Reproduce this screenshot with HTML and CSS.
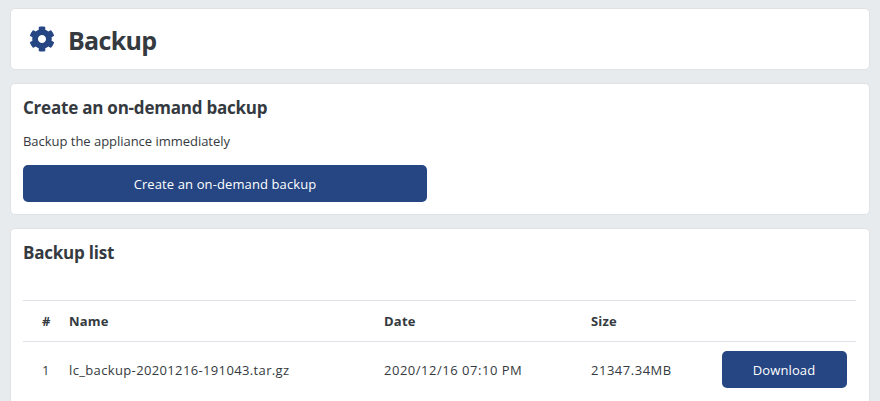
FILE: index.html
```html
<!DOCTYPE html>
<html lang="en">
<head>
<meta charset="utf-8">
<title>Backup</title>
<link rel="stylesheet" href="styles.css">
</head>
<body>
<header class="card head">
<svg class="gear" viewBox="0 0 512 512"><path d="M487.4 315.7l-42.6-24.6c4.3-23.2 4.3-47 0-70.2l42.6-24.6c4.9-2.8 7.1-8.6 5.5-14-11.1-35.6-30-67.8-54.7-94.6-3.8-4.1-10-5.1-14.8-2.3L380.8 110c-17.9-15.4-38.5-27.3-60.8-35.1V25.8c0-5.6-3.9-10.5-9.4-11.7-36.7-8.2-74.3-7.8-109.2 0-5.5 1.2-9.4 6.1-9.4 11.7V75c-22.2 7.9-42.8 19.8-60.8 35.1L88.7 85.5c-4.9-2.8-11-1.9-14.8 2.3-24.7 26.7-43.6 58.9-54.7 94.6-1.7 5.4.6 11.2 5.5 14L67.3 221c-4.3 23.2-4.3 47 0 70.2l-42.6 24.6c-4.9 2.8-7.1 8.6-5.5 14 11.1 35.6 30 67.8 54.7 94.6 3.8 4.1 10 5.1 14.8 2.3l42.6-24.6c17.9 15.4 38.5 27.3 60.8 35.1v49.2c0 5.6 3.9 10.5 9.4 11.7 36.7 8.2 74.3 7.8 109.2 0 5.5-1.2 9.4-6.1 9.4-11.7v-49.2c22.2-7.9 42.8-19.8 60.8-35.1l42.6 24.6c4.9 2.8 11 1.9 14.8-2.3 24.7-26.7 43.6-58.9 54.7-94.6 1.5-5.5-.7-11.3-5.6-14.1zM256 336c-44.1 0-80-35.9-80-80s35.9-80 80-80 80 35.9 80 80-35.9 80-80 80z"/></svg>
<h1>Backup</h1>
</header>
<section class="card create">
<h2>Create an on-demand backup</h2>
<p>Backup the appliance immediately</p>
<button class="btn wide">Create an on-demand backup</button>
</section>
<section class="card list">
<h2>Backup list</h2>
<table>
<thead><tr><th class="num">#</th><th class="name">Name</th><th class="date">Date</th><th class="size">Size</th><th></th></tr></thead>
<tbody><tr><td class="num">1</td><td class="file">lc_backup-20201216-191043.tar.gz</td><td class="when">2020/12/16 07:10 PM</td><td class="mb">21347.34MB</td><td><button class="btn small">Download</button></td></tr></tbody>
</table>
</section>
</body>
</html>
```
FILE: styles.css
```css
*{box-sizing:border-box}
body{margin:0;padding:8px 10px 0;height:401px;background:#e8ebee;color:#343a40;font:14px/20px "Open Sans","Noto Sans",sans-serif}
.card{background:#fff;border:1px solid #e0e3e6;border-radius:5px;margin:0 0 13px;padding:12px}
.head{height:62px;display:flex;align-items:center;padding:0 18px}
.gear{width:26px;height:26px;fill:#254683;margin:0 13px 1px 0}
h1{margin:2px 0 0;font-size:25px;line-height:34px;font-weight:700;letter-spacing:-.7px}
h2{margin:0;font-size:17px;line-height:24px;font-weight:700;letter-spacing:-.22px}
.create{height:132px}
.create p{margin:11px 0 14px;font-size:13px;letter-spacing:-.03px}
.btn{display:block;background:#254683;color:#fff;border:0;border-radius:5px;height:37px;font:13px/20px "Open Sans","Noto Sans",sans-serif;letter-spacing:.11px;padding:0}
.wide{width:404px}
.small{width:125px;margin-bottom:2px;padding:1px 1px 0 0}
.list{height:173px;margin:0;padding-bottom:0;border-bottom:0;border-radius:5px 5px 0 0}
table{width:833px;margin-top:35px;border-collapse:collapse;table-layout:fixed;font-size:13px}
th,td{padding:0;text-align:left;border-top:1px solid #dee2e6}
th{height:41px;letter-spacing:.2px}
td{height:57px}
.num{width:46px;padding-left:19px}
.name{width:315px}
.date{width:207px}
.size{width:131px}
.file{letter-spacing:.36px}
.when,.mb{letter-spacing:.52px}
```
